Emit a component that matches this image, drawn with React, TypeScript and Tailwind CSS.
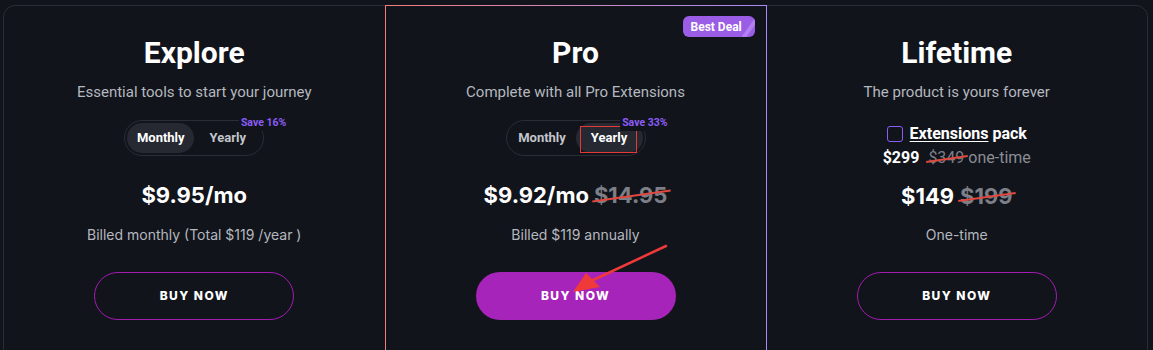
import type { ReactNode } from "react";

const font = { fontFamily: "Roboto, 'Liberation Sans', sans-serif" };
const priceFont = { fontFamily: "Inter, 'Liberation Sans', sans-serif" };

const Struck = ({ children, className = "" }: { children: ReactNode; className?: string }) => (
  <span className={`relative inline-block text-[#7c7f87] ${className}`}>
    {children}
    <span className="absolute left-[-2px] right-[-4px] top-1/2 h-[2px] -rotate-[8deg] bg-[#e0483e]" />
  </span>
);

const Toggle = ({ active, save, marked }: { active: "m" | "y"; save: string; marked?: boolean }) => (
  <div className="relative mt-[17px] flex h-9 w-[140px] items-center rounded-full border border-[#2a2d36] p-[2px] text-[13px] font-bold">
    <span
      className={`flex h-[30px] flex-1 items-center justify-center rounded-full ${
        active === "m" ? "bg-[#262932] text-white" : "text-[#c3c5cb]"
      }`}
    >
      Monthly
    </span>
    <span
      className={`relative flex h-[30px] flex-1 items-center justify-center rounded-full ${
        active === "y" ? "bg-[#262932] text-white" : "text-[#c3c5cb]"
      }`}
    >
      Yearly
      {marked && <span className="absolute left-[4px] right-[6px] top-[3px] bottom-0 border border-[#e53935]" />}
    </span>
    <span className="absolute right-[-25px] top-[-6px] bg-[#11141b] px-[2px] text-[10.5px] font-bold text-[#8b5cf6]">
      {save}
    </span>
  </div>
);

const BuyButton = ({ filled }: { filled?: boolean }) => (
  <button
    className={`mt-[26px] flex h-12 w-[200px] items-center justify-center rounded-full text-[12px] font-extrabold tracking-[0.12em] text-white ${
      filled ? "bg-[#a624b9]" : "border border-[#a21caf]"
    }`}
    style={priceFont}
  >
    BUY NOW
  </button>
);

const Column = ({ children }: { children: ReactNode }) => (
  <div className="flex flex-1 flex-col items-center pt-[28px]">{children}</div>
);

export default function App() {
  return (
    <div className="h-[350px] overflow-hidden bg-[#11141b] pl-[3px] pr-[5px] pt-[5px]" style={font}>
      <div className="flex h-[360px] rounded-xl border border-[#2a2d36]">
        <Column>
          <h2 className="text-[30px] font-bold leading-[38px] text-white">Explore</h2>
          <p className="mt-[9px] text-[15px] leading-[22px] text-[#b5b8bf]">Essential tools to start your journey</p>
          <Toggle active="m" save="Save 16%" />
          <div className="mt-[23px] text-[22px] font-bold leading-[32px] text-white" style={priceFont}>
            $9.95/mo
          </div>
          <p className="mt-[13px] text-[14px] leading-[22px] text-[#b5b8bf]" style={priceFont}>
            Billed monthly (Total $119 /year )
          </p>
          <BuyButton />
        </Column>

        {/* PRO CARD, gradient frame */}
        <div className="relative -mt-px flex w-[382px] flex-col border-x border-l-[#f47c7c] border-r-[#a78bfa] bg-[#11141b]">
          <div className="h-px bg-linear-to-r from-[#f47c7c] to-[#a78bfa]" />
          <div className="relative flex flex-1">
            <span className="absolute right-[11px] top-[10px] flex h-[21px] w-[72px] items-center overflow-hidden rounded-md bg-[#9b5de5] pl-[8px] text-[12px] font-bold text-white">
              Best Deal
              <span className="absolute right-[2px] top-[-4px] h-[30px] w-[4px] rotate-[35deg] bg-[#b27ff0]" />
            </span>
            <Column>
              <h2 className="text-[30px] font-bold leading-[38px] text-white">Pro</h2>
              <p className="mt-[9px] text-[15px] leading-[22px] text-[#b5b8bf]">Complete with all Pro Extensions</p>
              <Toggle active="y" save="Save 33%" marked />
              <div className="mt-[23px] flex items-baseline gap-[5px] text-[22px] font-bold leading-[32px] text-white" style={priceFont}>
                $9.92/mo <Struck>$14.95</Struck>
              </div>
              <p className="mt-[13px] text-[14px] leading-[22px] text-[#b5b8bf]" style={priceFont}>
                Billed $119 annually
              </p>
              <BuyButton filled />
            </Column>
            <svg className="absolute left-[183px] top-[238px]" width="100" height="55" viewBox="0 0 100 55">
              <path d="M97 2 L20 38" stroke="#f03a3a" strokeWidth="2.5" strokeLinecap="round" />
              <path d="M4 48 L17 29 L31 43 Z" fill="#f03a3a" />
            </svg>
          </div>
        </div>

        <Column>
          <h2 className="text-[30px] font-bold leading-[38px] text-white">Lifetime</h2>
          <p className="mt-[9px] text-[15px] leading-[22px] text-[#b5b8bf]">The product is yours forever</p>
          <div className="mt-[20px] flex items-center gap-[7px] text-[16px] font-bold leading-[22px] text-white">
            <span className="h-[16px] w-[16px] rounded-[3px] border border-[#8b5cf6]" />
            <span>
              <span className="underline underline-offset-2">Extensions</span> pack
            </span>
          </div>
          <div className="mt-[2px] flex items-baseline gap-[9px] text-[16px] leading-[22px]">
            <span className="font-bold text-white">$299</span>
            <span className="text-[#8a8d94]">
              <Struck>$349</Struck> one-time
            </span>
          </div>
          <div className="mt-[11px] flex items-baseline gap-[6px] text-[22px] font-bold leading-[32px] text-white" style={priceFont}>
            $149 <Struck>$199</Struck>
          </div>
          <p className="mt-[12px] text-[14px] leading-[22px] text-[#b5b8bf]" style={priceFont}>
            One-time
          </p>
          <BuyButton />
        </Column>
      </div>
    </div>
  );
}
